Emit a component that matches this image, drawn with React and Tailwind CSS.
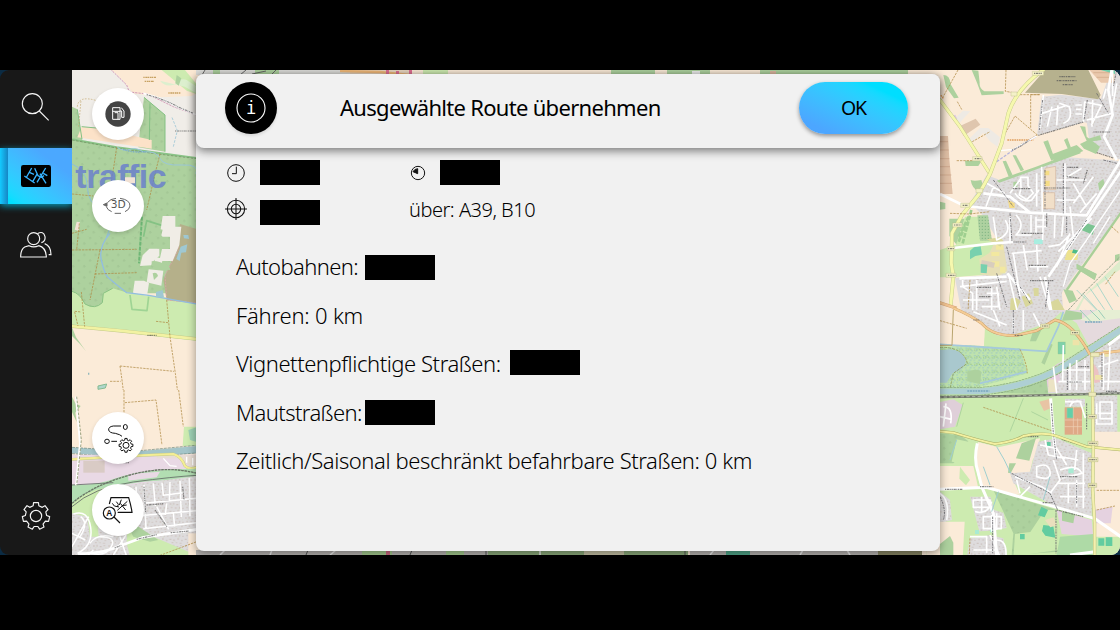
import React from 'react';

const F = { fontFamily: '"Noto Sans", sans-serif' };

function gear(cx, cy, ro, ri, n) {
  const pts = [];
  const step = (Math.PI * 2) / n;
  for (let i = 0; i < n; i++) {
    const a = -Math.PI / 2 + i * step;
    [[-0.3, ri], [-0.2, ro], [0.2, ro], [0.3, ri]].forEach(([o, r]) => {
      pts.push(`${(cx + Math.cos(a + o * step) * r).toFixed(1)} ${(cy + Math.sin(a + o * step) * r).toFixed(1)}`);
    });
  }
  return `M${pts.join('L')}Z`;
}

const Line = ({ d, c, w = 3, dash, o }) => (
  <path d={d} fill="none" stroke={c} strokeWidth={w} strokeDasharray={dash} opacity={o} strokeLinejoin="round" />
);
const Road = ({ d, w = 7, c = '#f6f8ae', e = '#c3c98a' }) => (
  <>
    <Line d={d} c={e} w={w + 2.5} />
    <Line d={d} c={c} w={w} />
  </>
);
const Area = ({ d, c }) => <path d={d} fill={c} />;
const Label = ({ d }) => <Line d={d} c="#555" w={3.5} dash="4 2 7 1.5 3 2" o={0.7} />;
const Track = ({ d }) => <Line d={d} c="#b08a45" w={2.2} dash="7 3" />;

const FIELD = '#fbebd8';
const GRASS = '#cdebb0';
const WOOD = '#add19e';
const TOWN = '#dedcdd';
const WATER = '#aecfd4';

function MapDefs() {
  return (
    <defs>
      <pattern id="houses" width="46" height="42" patternUnits="userSpaceOnUse">
        <rect width="46" height="42" fill={TOWN} />
        <g fill="#d0c7c3">
          <path d="M3 4h5v4H3zM13 2h4v6h-4zM23 6h6v4h-6zM35 3h4v4h-4zM7 14h4v5H7zM19 16h5v4h-5zM31 14h4v6h-4zM41 17h4v4h-4zM2 26h6v4H2zM14 28h4v5h-4zM26 25h5v4h-5zM38 29h4v5h-4zM9 36h5v4H9zM22 37h4v3h-4zM33 38h6v3h-6z" />
        </g>
        <path d="M10 9h3v3h-3zM28 20h4v3h-4zM40 10h3v3h-3zM18 34h3v3h-3z" fill="#d6dacb" />
      </pattern>
      <pattern id="wood" width="34" height="34" patternUnits="userSpaceOnUse">
        <rect width="34" height="34" fill={WOOD} />
        <path d="M5 8l4-4 4 4M9 4v7M23 25l3-4 4 4M26 21v7" fill="none" stroke="#9cc18e" strokeWidth="2" />
      </pattern>
      <pattern id="reed" width="26" height="22" patternUnits="userSpaceOnUse">
        <rect width="26" height="22" fill="#bfe3ad" />
        <path d="M2 5h6M13 3l5 3M20 13h5M7 14l6-3M1 19h4M15 19h6" stroke="#8fbdc9" strokeWidth="2.5" />
        <path d="M9 8h4M17 9h4M3 11h3" stroke="#86b878" strokeWidth="2.5" />
      </pattern>
      <pattern id="orchard" width="9" height="9" patternUnits="userSpaceOnUse">
        <rect width="9" height="9" fill="#aed1a0" />
        <circle cx="4" cy="4" r="2" fill="#80b383" />
      </pattern>
    </defs>
  );
}

function MapWest() {
  return (
    <>
      <g transform="translate(0 60) scale(.33333)">
        <Area d="M216 20H600V300H216Z" c="#f0ede8" />
        <Area d="M322 20H600V95L575 108L480 112L398 100Q375 60 322 20Z" c="#fce9d4" />
        <Area d="M485 30L555 30L600 85V106L560 92Z" c={GRASS} />
        <path d="M480 62q15 20 42 12q20-22 38-14l40 26v20l-46-26z" fill="#dcefce" />
        <path d="M530 45l14 10-8 22-10-8z" fill={WOOD} />
        <path d="M216 140L232 148L246 240L216 236Z" fill="url(#wood)" />
        <path d="M432 112L495 165V275L415 262L420 210Z" fill="url(#wood)" />
        <Area d="M245 200L300 205L455 240V266L232 232Z" c="#fce2c8" />
        <Line d="M245 200L300 205M450 130l-2 110M432 112L495 165V275M232 148l14 90" c="#83c083" w={3} />
        <path d="M216 240L390 268L588 298V640H216Z" fill="url(#wood)" />
        <Line d="M216 238L350 262L450 275L588 294" c="#8ac487" w={6} />
        <Line d="M216 240L350 264L450 279L588 296" c="#6f8a5b" w={2} dash="8 4" />
        <Line d="M330 26L380 75L388 96L442 102L520 140L588 165" c="#d29bb8" w={3} dash="7 3" />
        <Line d="M430 100Q500 118 530 140L588 164" c="#fff" w={5} />
        <Label d="M440 104Q500 120 532 140L580 160" />
        <Label d="M525 213H588" />
        <Line d="M232 140Q235 105 290 122M236 200L243 120" c="#c1a46a" w={2} dash="5 4" />
        <Line d="M520 260L532 212L515 170" c="#9fc6d6" w={2.5} dash="8 4" />
        <Line d="M352 262Q370 275 390 268T430 276Q470 272 480 295T545 315T588 342" c="#9bc7d8" w={3} />
        <Line d="M370 268Q400 280 440 274" c="#78aac6" w={4} dash="3 2" />
        <Line d="M216 312Q260 330 262 380T300 445T328 510Q300 570 300 610" c="#8fbfd7" w={3} />
        <Track d="M216 402L280 408M350 262L343 310L335 358M480 282L468 330L440 450M216 520L260 508M216 572L400 568" />
        <Line d="M430 52h38M434 64h28M505 99h36" c="#b98f45" w={4} dash="4 2 6 1" o={0.8} />
        <text x="226" y="384" fill="#6b80cc" fontFamily="Liberation Sans" fontWeight="700" fontSize="102" textLength="274" opacity=".85">traffic</text>
        <Area d="M375 352h30v18h-30zM230 485l10 2-4 25-12-3z" c="#f3e3d6" />
        <path d="M440 480L588 520V640H418Z" fill="url(#wood)" />
        <Line d="M418 640L425 560L440 482L535 512L588 525" c="#84c284" w={5} />
        <Area d="M535 512L588 528V640H520L518 600Z" c="#b5b08a" />
        <path d="M545 532l18-6-2 22-16 6zM540 562l22-8 2 10-14 24-12-6z" fill="#9fc8d2" />
        <path d="M490 500l42 12-6 40-46 16 4-24 8-8-8-10zM476 568l46-4-10 46-28 20h-60l6-40 16-10 20 10z" fill="#f0ede6" />
      </g>
      <g transform="translate(70 230) scale(.33333)">
        <path d="M6 20H390V190H6Z" fill="url(#wood)" />
        <path d="M6 184Q30 190 45 222Q75 240 97 218L100 190L128 175L165 186L235 196L390 215V335L6 290Z" fill={GRASS} />
        <path d="M6 182Q30 190 45 222Q75 240 97 218L100 190L100 170L6 170Z" fill="url(#wood)" />
        <Area d="M330 -18L390 0V222L290 210L280 150L315 70Z" c="#b5b08a" />
        <Line d="M320 5L325 60L285 135L290 210L390 220" c="#d8a4ab" w={2.5} dash="6 3" />
        <g fill="#f0ede6">
          <path d="M278 -42h38v32h18l-6 55-20 48h-40l8-36h24v-36l-8-18-20-5zM238 56h30v22q-20 12-24 28l-34 2 8-32zM236 118l44 4-6 45-44-10zM194 152h28l15 8-6 38-42-10zM254 80l24 6-4 24-20-4z" />
        </g>
        <path d="M245 94q16-4 52 14l4 12-30-2-26-10zM248 130q12-6 16 8l-12 12z" fill={WOOD} />
        <Line d="M216 -40L207 100" c="#6eb776" w={6} dash="12 3" />
        <Line d="M6 184Q30 190 45 222Q75 240 97 218L100 190L128 175" c="#88c282" w={3} />
        <Line d="M180 195L186 238L231 242L236 200" c="#9fd494" w={5} />
        <Line d="M120 10Q85 50 94 90T112 140T170 188L236 196L390 224" c="#92bde0" w={4} />
        <path d="M340 15l15 0 2 12-15-2zM332 50l20-7-4 24-14 1-5 25-10-6zM258 186l20-6 4 22-24 0z" fill="#9fc8d2" />
        <Area d="M6 292L390 334V580H6Z" c={FIELD} />
        <Road d="M0 288L150 302L390 328" w={8} c="#f2f2a2" />
        <Label d="M232 316h28" />
        <Track d="M6 60L200 58M28 -20L20 60M90 60L60 210M74 132L200 128M34 186L44 290M14 244L34 246M14 246L24 288M290 210L300 320L316 430L334 575M258 274L294 278M150 408L312 424M150 408L156 450L168 550M120 454L152 454M166 518L250 512Q265 530 268 580" />
        <path d="M84 468l26-6-4 12-22 4z" fill="#afd7cc" stroke="#85ba91" strokeWidth="3" />
        <path d="M236 502l8-4 8 4zM54 428h4v6h-4z" fill="#93b9bc" />
        <path d="M6 292l12 30 30 42-18-22L6 318zM6 505l12 20 18 2-16 24-3 24-11-24z" fill={WOOD} />
      </g>
      <g transform="translate(0 390) scale(.33333)">
        <Area d="M216 0H590V178H216Z" c={FIELD} />
        <path d="M216 20l10 20 16 8-16 20 4 28-14-30z" fill={WOOD} />
        <path d="M552 110h38v58h-42z" fill={GRASS} />
        <path d="M565 120l25-8v44l-20-6z" fill="#9ed1b5" />
        <Area d="M216 172L400 185L588 168V190L400 204L216 190Z" c="#a4c5c9" />
        <Line d="M216 172L400 184L588 166M216 191L400 204L588 189" c="#69857c" w={2} dash="9 3" />
        <Area d="M216 194H590V284L216 288Z" c="#e9d9e5" />
        <path d="M470 205h70q20 20 50 35v-44H470z" fill="#e7ddd4" />
        <Area d="M250 212h64v36h-64z" c="#d9cbc5" />
        <Road d="M216 208L430 196L520 192Q545 200 555 228Q568 240 590 232" w={6} c="#f4ee94" />
        <Line d="M490 205l20 22 20 2M560 200v18M578 204v22" c="#fff" w={4} />
        <path d="M216 284Q280 290 350 264T590 236V264L430 275L320 292L216 342Z" fill="#b2deb2" />
        <path d="M385 252L480 245L470 262L385 272Z" fill="#e9d9e5" />
        <path d="M388 285L590 258V500H216V342Q300 300 388 285Z" fill="url(#houses)" />
        <path d="M216 342Q250 305 310 294H400Q300 330 290 370L296 440L270 440L262 380L216 370Z" fill={GRASS} />
        <path d="M382 405L460 440L600 500H390L380 460Z" fill={GRASS} />
        <path d="M382 405L400 400L475 450L450 455L400 440Z" fill={WOOD} />
        <Area d="M565 430h30v70h-30z" c={FIELD} />
        <Line d="M216 340Q280 285 390 255T590 250" c="#697665" w={4} dash="8 2" />
        <Line d="M216 350Q280 292 400 276T590 256M216 285L340 278" c="#646b66" w={2.5} />
        <Line d="M228 20L240 160L228 286" c="#fff" w={6} /><Line d="M230 20L244 150L230 286" c="#89946e" w={2.5} dash="8 4" />
        <Line d="M408 290l4 80M432 284l6 132M460 280l6 68M486 278l4 38 60-8M510 276l-2 60M540 272l4 110M568 264l2 115M430 340L590 325M410 378L588 362M430 416L588 398M470 350l36 68M500 340l-4 35M520 370l4 40M216 470l50-90M220 372q44-15 52 40t-40 78M242 380q25 20-2 60M300 440q50 0 34 30t-60 20M270 460q20-30 70-20M340 495l38-60M360 440l20 60M216 430l40 20M280 480l-20 20" c="#fff" w={4.5} />
        <Line d="M234 490Q300 495 365 466L430 442L590 418" c="#fff" w={8} />
        <Label d="M344 474l20-8M410 448l60-14M512 428l55-5" />
        <Label d="M432 290l5 80M465 360l36 50M440 345l50-4M548 290l4 40M350 218h38" />
        <Track d="M372 0V100M374 38L468 30L486 165M536 0L550 110M470 500L590 455" />
      </g>
    </>
  );
}

function MapEast() {
  return (
    <>
      <g transform="translate(930 60) scale(.33333)">
        <Area d="M-10 20H575V760H-10Z" c={FIELD} />
        <Area d="M336 110L392 104L512 118L545 26H575V305L545 300L410 292L330 320L210 360L170 345L120 430L158 466L215 560L230 640L75 655L95 760H480L400 690L575 455V760H370L400 690L468 610L575 470V300L480 270L470 185L322 225L330 150Z" c={TOWN} />
        <path d="M205 362L320 322L410 292L480 270L470 185L322 225L205 300Z" fill={FIELD} />
        <path d="M336 110L512 118L575 60V295L490 270L485 195L460 185L322 225ZM190 365L335 320L410 295L575 305V450L395 690L400 760H98L88 655L230 640L180 462L115 435L160 400Z" fill="url(#houses)" />
        <path d="M405 690L575 458V750H470L400 712Z" fill={FIELD} />
        <path d="M345 30H475L512 105L505 118L395 102L285 98Z" fill="#b6b18e" />
        <Label d="M388 50h48M380 62h60M398 74h30" />
        <path d="M478 30h75v38h-40z" fill="#e9c8ac" /><Line d="M490 38h58M500 52h50" c="#d0a788" w={2} /><path d="M505 28h50v14z" fill="#71cdaa" />
        <g fill={WOOD}>
          <path d="M40 45q20 0 22 28l24 40-14 2-24-34zM125 30l20 2 4 36q-2 16 14 26l58 0v8l-66 4q-12-35-30-76zM105 302h50l-10 16h-38zM122 360q10 4 32 0l4 14-12 20q-20-8-24-34zM30 425l16 4v18l-16 2z" />
          <path d="M218 304l10-2 20 44-12 4zM248 286l10 0 24 44-10 4zM340 245l14-4 20 55-10 6zM402 240l10-6 10 26-6 12zM360 285l80-30 20 18-84 34zM250 365l12 0v16l-12 0zM504 370l16-14 4 18-16 18z" />
          <path d="M450 198l16 2 4 30 40 30-12 22-36-16-12-14 20-10z" /><path d="M200 362L318 320L450 270L452 280L320 328L208 368ZM470 238l40-12 4 14-35 5z" />
          <path d="M58 476h60l-38 78-22-26zM400 688l28 4 12 28-22 10zM440 612l60 30-6 18-54-34zM555 585l14-4v20l-14 4z" />
        </g>
        <path d="M105 470h60v60l20 10v14H78z" fill={GRASS} />
        <Line d="M86 545L108 490M98 550L124 450M86 530l30-60" c="#9fcf90" w={8} dash="14 4" />
        <path d="M142 466h32l12 76h-36z" fill="url(#orchard)" />
        <path d="M30 570L70 556L192 550L220 575L226 640L70 652H30Z" fill={GRASS} />
        <path d="M190 555l30-2 12 80-30 18-50-8-4-46 30-18z" fill="#e7dfb6" />
        <path d="M198 555h22v14h-22zM184 576h24v12h-24zM186 604h22v16h-22zM210 620h16v18h-16z" fill="#f2e8a0" /><path d="M155 600l40 8-4 16-38-8z" fill="#d8cdbd" />
        <path d="M132 562l20-4 4 26-20 4-16 10v-26zM152 612l20 2-2 26-18-2z" fill="#78d0ae" />
        <path d="M85 200l52-24 14 18-50 34z" fill="#dfc6ae" /><path d="M75 174l24-22 22 2-32 34zM120 234l30-30 25 0 35 28-8 28-22-16-20-26-38 32z" fill="#eeeae4" />
        <path d="M30 228h24l4 70 10 104H30Z" fill="#dfbfa5" />
        <Line d="M30 245h24M30 270h26M30 296h28M30 320h30M30 345h34M30 370h36" c="#c79f84" w={2} />
        <path d="M66 168l10-4 6 14-12 4z" fill="#dcc7df" />
        <path d="M470 490l26 8-8 26-34-14z" fill="#7cc492" /><path d="M312 538h26v14h-26z" fill="#a8eee0" /><path d="M412 570l34 0-4 30-38 0z" fill="#ede28f" /><path d="M430 568l16 4-4 10-16-4z" fill="#4dbb8a" />
        <g fill="#f1dfc8" stroke="#d7b7a0" strokeWidth="2"><path d="M345 325l32-6v70h-32zM338 398h36v48h-36z" /></g>
        <path d="M344 332h14v14h-14zM345 362h14v16h-14zM234 420l20 10v14h-16z" fill="#f5dc86" />
        <path d="M242 716q18-8 30 8l-14 28h-18zM310 684h16v24h-14zM275 710l22-10 12 30-22 12zM358 728l26-12 20 34h-40zM170 538l40-6 10 10-8 18z" fill="#d9d79b" />
        <Line d="M575 455L410 690" c="#a9cf98" w={7} />
        <path d="M440 612l60 30-6 18-54-34z" fill={WOOD} />
        <path d="M430 760l30-50 115-85v-28L470 700l-30 60z" fill="#ddeccb" />
        <Line d="M440 690l60 60M458 700l44 50M480 685l44 64M500 670l48 80M525 650l40 60" c="#9ed2c7" w={2.5} />
        <Line d="M415 750L470 690L570 590" c="#95a38b" w={3} dash="8 3" />
        <Track d="M228 30L226 94L250 98M250 104L330 104L300 104M302 106V205M322 225L255 168L220 230M322 225L270 255M82 125L96 150M118 250L180 215M80 302L130 302M84 30L34 120" />
        <Line d="M232 240H310M40 115l-8-10" c="#e0a060" w={4} dash="5 2" />
        <Line d="M200 305l60-42 60-35" c="#b5b4dc" w={4} dash="9 4" /><Line d="M210 272l40-4L320 228" c="#fff" w={4} />
        <Line d="M330 205l10-100M352 200l14-60M380 196l4-60M400 190q30-10 18-50l-30-10M436 135h20M438 148h16M436 162h20M460 186l4-60 50 10-30 60M488 120l-2 80M336 160l70-22M470 180L545 160L560 70M520 116l8-30M548 108V30M170 370l54 30M190 380l-22 60M240 400l32-44M272 352h22v25l16 22-20 20-22-14 5-20zM255 400q20 30 50 20l22-30M320 340v100M335 320l2 140M405 310v150M380 360h90M380 420h60M455 325l-50 30M490 350l-60 80M500 400l-50 58M430 370l40 70M190 470l10 70q50-20 26-60M240 470v80M258 465q30 30 0 60h45v-60M318 470v50M340 460l-2 80M375 465l-2 70M400 470l-5 60M420 440l10 90M320 480h30M320 500h30M245 580l90-8M280 555l12 76M320 555l4 80M250 580l20 130M300 620h55M235 640l28 120M90 680l140-16M140 660v90M98 720h80M185 685v70M330 650l30 100M420 520l-40 100M385 575l100-100M355 560l35-6 30-30M98 660v20l30 20v50M170 700h35v40h-50M200 680l10 70" c="#fff" w={5} />
        <Line d="M30 402L104 438L300 458L470 466L575 296M160 400L240 410L300 458M70 564L190 550L250 546M88 655L230 650M355 650L575 330M232 640L300 720M545 30L535 90L548 165L522 230L560 300M345 650L365 760" c="#fff" w={8} />
        <Line d="M190 360L250 440M345 330v120M338 120l-10 90M400 310v150M240 460l6 85M230 560l40 160M270 680l30 50M472 120l-10 60M356 665l-10 80M500 100l35 60M560 30l-10 50M410 470v50M200 640l30 100M470 480l-60 90M520 300l40 10" c="#66666b" w={2.5} dash="8 3 3 3" />
        <Label d="M246 270Q270 262 298 240M325 226L460 186M412 322h34M410 350l36 4M248 386h55M275 520h64M250 546h40M296 616h52M300 662h70M140 682h44M148 710h36M342 384h76M500 278l50 16M350 500v-40M472 330l-12 40M490 216h50" />
        <Line d="M575 385L470 540L420 610L400 680M540 470l-50 80" c="#fff" w={4} />
        <Road d="M-4 92L30 120L90 200L180 342" w={8} />
        <Road d="M342 28Q260 85 235 160L215 250L180 342L145 405L96 465L66 520L64 610L70 650L62 735" w={9} />
        <Road d="M20 725L80 745" w={7} c="#f3c592" e="#d2a071" />
        <g fill="#f4f1c8" stroke="#b4b480"><path d="M307 34h34v12h-34zM243 96h18v12h-18zM128 290h28v12h-28zM138 386h20v12h-20zM68 489h28v12H68zM52 560h22v12H52zM48 640h30v12H48zM92 430h26v12H92z" /></g>
        <Label d="M312 40h24M134 296h20M72 495h22M54 566h18M54 646h22M98 436h16" />
        <Track d="M60 460L118 462L180 455M555 635l-30 40M545 500l20 18M120 660l-6 94" />
      </g>
      <g transform="translate(930 310) scale(.33333)">
        <Area d="M-10 0H575V750H-10Z" c={GRASS} />
        <Area d="M-10 0H130L165 50L162 110L-10 102Z" c={FIELD} />
        <path d="M88 0H400L360 36L240 78L200 76L155 40Z" fill="url(#houses)" />
        <path d="M385 0H575V100L540 80L475 105L440 40Z" fill="#e5dadd" />
        <path d="M408 0l48 8v20l-60 4z" fill={WOOD} /><path d="M500 0H575V24L490 35L450 30Z" fill="#e6efd4" /><Line d="M450 0l34 36M480 0l30 30M505 0l20 26" c="#9bcdb8" w={3} />
        <path d="M165 82Q230 90 310 56L375 35L350 90L335 122L162 108Z" fill={GRASS} />
        <path d="M310 60l28-8-20 42-18 0zM360 100l8 4-24 60-10-6z" fill={WOOD} />
        <path d="M384 96h22v36h-22z" fill="#7fd1aa" stroke="#9cc58c" />
        <path d="M385 160L575 60V250H350L340 210Z" fill="url(#houses)" />
        <path d="M325 205L385 160L390 215L352 230Z" fill="#e4cbdd" />
        <path d="M355 208h24v38h-24z" fill="#ebe3c4" /><path d="M490 160l14 20 6 36-16 4-8-30z" fill="#ecc2c2" /><path d="M428 90h20v16h-20zM495 195l26 0v14h-26zM520 120l20 0v20h-16z" fill="#eee3a9" />
        <path d="M-10 118L110 105L270 115L292 190L150 230L60 235H-10Z" fill="url(#reed)" />
        <path d="M112 186q30-14 42 0l-4 36-38-8z" fill={WOOD} />
        <Area d="M-10 120H40Q90 110 108 150Q105 180 68 190L50 218H-10Z" c="#a9c8ce" />
        <Line d="M30 112Q100 110 112 160L70 190L60 235H30" c="#94a66c" w={3} dash="9 3" />
        <Line d="M30 103L350 124L385 50L400 5M150 220L290 185" c="#a5c9dc" w={5} />
        <path d="M200 250L320 200L385 176L350 210L355 252Z" fill="url(#wood)" />
        <Line d="M-10 244H150Q300 230 400 170L575 58" c="#7c9a76" w={25} dash="8 2" />
        <Line d="M-10 244H150Q300 230 400 170L575 58" c="#b7dba6" w={22} />
        <Line d="M-10 244H150Q300 230 400 170L575 58" c={WATER} w={17} />
        <Line d="M112 243h66M465 36h50" c="#79a7bd" w={5} dash="6 2" />
        <Road d="M70 -6Q120 15 155 40Q190 80 260 76L320 62L375 30Q430 40 480 134" w={6} c="#f4cb94" e="#c99c63" />
        <Road d="M480 134L575 122" w={6} c="#f4cb94" e="#c99c63" />
        <Line d="M70 0L66 106M66 106H30" c="#b9a56e" w={3} />
        <Line d="M-10 262L250 258L575 250" c="#70756b" w={7} /><Line d="M-10 262L250 258L575 250" c="#c9cdc0" w={2} dash="10 7" />
        <path d="M30 276L70 268L98 285L75 350L30 358Z" fill="#dfcfd9" /><Line d="M40 290q30 0 22 50M30 320l34 8M48 280l-8 70" c="#fff" w={5} />
        <Line d="M280 265L240 365M100 278L80 350M304 305l50 25" c="#aed59e" w={3} />
        <Track d="M160 292L365 362M30 32L110 55M270 118q20 40 22 72" />
        <path d="M328 275l30-8 4 28-20 8z" fill="#e8c4a4" /><path d="M405 266h60v24h-60zM492 256h70v110H492Z" fill="url(#houses)" />
        <path d="M404 292h52v82h-52z" fill="#dfa986" /><Line d="M404 330h52M404 350h52M430 290v82M443 325v48" c="#eed1b8" w={2} /><path d="M411 294h18v30h-18z" fill="#62cfa9" stroke="#a5c9a0" strokeWidth="2" />
        <path d="M30 370L90 375L115 394L90 440L70 460H30Z" fill="url(#wood)" /><path d="M80 388L136 400L132 465L65 455Z" fill={GRASS} />
        <path d="M144 396L205 412L330 385L320 430L308 450L300 485L245 500L270 555L155 535Q130 480 144 396Z" fill={FIELD} />
        <path d="M275 400L318 384L298 452L258 445ZM238 460l20 0-16 30-8-2z" fill={WOOD} />
        <Area d="M30 468H130L145 535L30 538ZM492 365H575V680H495Z" c={FIELD} />
        <path d="M90 470l30 40-12 16-20-20z" fill={GRASS} />
        <path d="M325 395L380 385L485 430V618L375 590L250 520L240 490L300 485Z" fill="url(#houses)" />
        <path d="M30 545L60 570L66 630L30 640Z" fill="url(#houses)" />
        <path d="M190 540L380 600L385 725L245 735L250 670Z" fill="url(#wood)" />
        <path d="M345 600l35 0 5 120-100 14-34 0 4-62 46-6z" fill={GRASS} />
        <path d="M-10 635H104L98 745H-10Z" fill={FIELD} /><path d="M30 702l30-24 10 20v50H30Z" fill={WOOD} />
        <path d="M120 560h62l10 40 28 8 10 46-48 8-34 2zM120 685l60-10 40 10 10 60H110Z" fill="url(#houses)" />
        <path d="M380 600L485 630L490 680L395 672Z" fill="#e5d2e0" /><path d="M396 606h40l-6 34-34-8z" fill={WOOD} /><path d="M494 600l54-10-6 50-44 0z" fill="#e5d2e0" />
        <path d="M390 680L490 672L488 735H380Z" fill="#aedaa6" /><path d="M505 685h18v22h-18zM527 682h20v26h-20zM334 590l20 10-10 22-20-6zM340 645l30 4 6 34-30-6-10-14zM270 672h14v16h-14zM350 396h12v12h-12z" fill="#62cca0" />
        <path d="M415 474h16v16h-16zM135 660h12v12h-12zM180 655h10v12h-10z" fill="#a9ebd3" /><path d="M345 630l26-8 10 24-20 6z" fill="#eadfbd" />
        <Line d="M400 105L398 215M385 215h100M420 160v80M440 150v90M465 150v90M400 180h80M370 170l10 80M520 130v110M540 110l-6 130M505 170l60-20M510 215h60M420 290q5-20 30-16l16 50M405 275h50M500 280v62h46v-66h-36v50h36M505 310h40M330 405l50 10 30 50M345 390l10 45 50 10M390 440l55 10M320 470q35-15 40 15t-40 15zM370 450l20 60-30 40M390 480q50-20 66 10l-60 14M440 420l-6 60M385 520h80M390 560h75M415 520v60M440 510v80M460 430v165M260 510l10 40M300 530l-30 30M365 550l-30-20-80-30M30 550q30 20 20 80M130 570h50v22h-50zM135 605q40 10 50-30M155 560v50M160 620h54v36h-54zM185 615v50M200 610v50M120 680h50v50M180 675l30 65M130 720h70M200 690q30 0 28 45M250 20v45M280 0v60M310 10l20 40M130 5l100 40M190 0l20 50" c="#fff" w={5} />
        <Line d="M362 265L370 370L378 440M142 400Q130 450 145 490L156 532M30 538L170 532L372 590L495 626L575 682M156 532L190 610L200 735M575 75L535 105M420 735L490 726" c="#fff" w={9} />
        <Line d="M364 280L370 370L380 450M245 490L360 550L382 598M188 620v110M378 600v130M470 280v80M412 170v70M30 560q20 40 10 70M250 0v70M440 580v-60M484 180v60M516 130v100" c="#65656a" w={2.5} dash="7 3 4 2" />
        <Label d="M45 538h52M338 578h30M412 216h44M445 170h34M528 244h34M150 530h40M380 600l80 20M390 500h52M275 380h50M395 388l46 14" />
        <Line d="M200 410Q225 450 242 490M160 470l20 55M205 545l-20 60M360 500l-20 70M60 450l20-60" c="#9fcfd0" w={3} />
        <Road d="M-10 360L70 368Q140 390 195 402Q250 395 280 378Q340 365 380 378L470 410L575 420" w={6} c="#f3f0a0" e="#a8ad68" />
        <Road d="M485 134L488 260L490 420L488 540L494 640V750" w={7} c="#f3f0ae" e="#b9ba78" />
        <g fill="#eeeabb" stroke="#9fa069"><path d="M474 394h30v12h-30zM474 443h30v12h-30zM474 520h26v12h-26zM476 247h22v12h-22zM474 314h26v12h-26zM422 62h26v12h-26zM332 42h26v12h-26zM482 128h26v12h-26z" /></g>
        <Label d="M478 400h22M478 449h22M478 526h18M478 320h18M254 76h24M426 68h18M336 48h20M130 30h20" />
        <Track d="M500 541H570M500 600L555 588M120 685l-2 50" />
      </g>
    </>
  );
}

function MapMiddle() {
  return (
    <>
      <path d="M196 70h154v5H196z" fill="#dcdcd9" /><path d="M350 70h60v5h-60z" fill="#e8d5bf" />
      <path d="M213 70h7v5h-7zM255 70h24v5h-24zM611 70h44v5h-44zM667 70h43v5h-43zM760 70h148v5H760z" fill={WOOD} />
      <path d="M423 70h25v5h-25z" fill={GRASS} />
      <path d="M202 75l3-5M240 75l6-5M252 74l14-3M271 75l5-5" stroke="#666" fill="none" />
      <path d="M340 71l40 1 30 3" stroke="#f0b878" strokeWidth="2.5" fill="none" />
      <path d="M386 70h3v4h-3zM396 71h3v4h-3zM409 70h3v5h-3z" fill="#df6f93" />
      <path d="M692 71h8v3h-8z" fill="#eee" /><path d="M770 71h6v4h-6z" fill="#dcb7a0" />
      <path d="M196 550h292v5H196zM690 550h190v5H690z" fill="#bab7b4" />
      <path d="M488 550h200v5H488z" fill="#8fae7e" /><path d="M362 550h30v5h-30zM446 550h18v5h-18z" fill="#a8cf92" />
      <path d="M584 550h40v5h-40z" fill="#c9c5a8" /><path d="M386 550h4v5h-4z" fill="#cf6a84" /><path d="M726 550h24v5h-24z" fill="#52a98c" />
      <path d="M878 550h44v5h-44z" fill="#8a8865" />
      <path d="M220 555l5-5M270 555l2-5M330 555l6-5M540 555v-5M710 555l4-5M800 555l3-5M850 555l-3-5" stroke="#eee" strokeWidth="1.5" />
      <path d="M486 555v-5M685 555v-5M306 555l2-5M410 555l2-5" stroke="#555" />
    </>
  );
}

function CityMap() {
  return (
    <svg className="absolute inset-0 h-full w-full" viewBox="0 70 1120 485" preserveAspectRatio="none">
      <MapDefs />
      <rect x="60" y="70" width="1060" height="485" fill={FIELD} />
      <MapWest />
      <MapMiddle />
      <MapEast />
    </svg>
  );
}

const Round = ({ children, className = '' }) => (
  <button className={`flex h-[52px] w-[52px] shrink-0 items-center justify-center rounded-full bg-white shadow-[0_2px_4px_rgba(0,0,0,0.14)] ${className}`}>{children}</button>
);

function Sidebar() {
  return (
    <nav className="relative flex h-full w-[72px] shrink-0 flex-col overflow-hidden rounded-l-[9px] bg-[#181818]">
      <div className="flex h-[78px] items-center pl-5">
        <svg className="-mt-[6px] h-8 w-[30px]" viewBox="60 90 90 96" fill="none" stroke="#f4f4f4" strokeWidth="3.5">
          <circle cx="97" cy="131" r="30" /><path d="M118 153L146 181" />
        </svg>
      </div>
      <div className="flex h-14 bg-linear-to-tr from-[#00e0ff] from-10% to-[#4ba8ff] to-75% shadow-[0_2px_7px_rgba(0,200,240,0.75)]">
        <div className="h-full w-2 bg-linear-to-r from-[#13caff] to-[#1686c4]" />
        <div className="flex items-center pl-[13px]">
          <svg className="h-[22px] w-[30px]" viewBox="63 315 90 66">
            <rect x="63" y="315" width="90" height="66" rx="7" />
            <g fill="none" stroke="#37b3ff" strokeWidth="4">
              <path d="M95 324L78 354M73 348L104 369M88 337L102 343M98 365L112 341M104 325L114 347L124 352L132 347M137 324L111 367M120 341L138 370M130 340L142 347" />
            </g>
          </svg>
        </div>
      </div>
      <div className="flex h-[83px] items-center justify-center">
        <svg className="h-8 w-8" viewBox="59 508 96 96" fill="none" stroke="#f4f4f4" strokeWidth="3.5">
          <circle cx="100" cy="534" r="18" />
          <path d="M61 589Q61 566 73 559L86 555Q100 562 115 555Q137 560 138 589ZM111 519Q130 509 134 528Q136 542 123 546M133 549Q152 556 152 582H145" />
        </svg>
      </div>
      <div className="mt-auto flex h-[78px] items-center justify-center">
        <svg className="h-8 w-8" viewBox="59 330 96 96" fill="none" stroke="#f4f4f4" strokeWidth="3.5" strokeLinejoin="round">
          <path d={gear(107, 378, 41, 32, 7)} /><circle cx="107" cy="378" r="17" />
        </svg>
      </div>
    </nav>
  );
}

function MapButtons() {
  return (
    <div className="relative flex w-[124px] shrink-0 flex-col pt-[18px] pl-5">
      <Round>
        <svg className="h-9 w-9" viewBox="299 107 108 108" fill="none" stroke="#fff" strokeWidth="3">
          <circle cx="353" cy="161" r="38" fill="#444" stroke="none" />
          <path d="M337 142H359V177H337ZM343 157H353V177M359 152H364V171H371V152L363 142M337 153h22" />
        </svg>
      </Round>
      <Round className="mt-10">
        <svg className="h-9 w-9" viewBox="299 384 108 108" fill="none" stroke="#666" strokeWidth="3">
          <path d="M321 428Q330 416 347 415M359 415Q389 419 389 438Q387 450 374 455M362 460H343M334 455Q321 450 318 440" />
          <path d="M309 434L320 429V439Z" fill="#666" />
          <text x="331" y="445" fontSize="31" textLength="45" lengthAdjust="spacingAndGlyphs" fontFamily="DejaVu Sans" fill="#555" stroke="none">3D</text>
        </svg>
      </Round>
      <Round className="mt-[180px]">
        <svg className="h-9 w-9" viewBox="300 90 108 108" fill="none" stroke="#111" strokeWidth="3">
          <ellipse cx="376" cy="111" rx="6" ry="7.5" /><ellipse cx="321" cy="154" rx="7" ry="6.5" />
          <path d="M363 108H340Q325 110 326 120Q328 129 346 130Q362 134 366 139M334 154H351" />
          <path d={gear(378, 166, 21, 16, 8)} /><circle cx="378" cy="166" r="9" />
        </svg>
      </Round>
      <Round className="mt-5">
        <svg className="h-9 w-9" viewBox="300 306 108 108" fill="none" stroke="#111" strokeWidth="3.5">
          <path d="M328 342L333 323H386Q394 350 396 367H353M342 381L360 399" /><circle cx="328" cy="369" r="18" />
          <path d="M337 340L343 348L357 351M349 335L355 343L352 351M364 329L358 345M361 340L377 360M382 334L352 361M366 347L380 345" strokeWidth="3" />
          <text x="319" y="378" fontSize="25" fontWeight="700" fontFamily="Liberation Sans" fill="#111" stroke="none">A</text>
        </svg>
      </Round>
    </div>
  );
}

const Bar = ({ className = '' }) => <span className={`block shrink-0 bg-black ${className}`} />;

function RouteDialog() {
  return (
    <section className="relative mt-1 flex h-[477px] w-[744px] flex-col rounded-lg bg-[#f1f1f1] text-black shadow-[0_3px_10px_rgba(0,0,0,0.4)]">
      <header className="flex h-[74px] shrink-0 items-center rounded-lg bg-[#f1f1f1] pr-8 pb-[6px] pl-[29px] shadow-[0_3px_10px_rgba(0,0,0,0.5)]">
        <span className="flex h-[52px] w-[52px] items-center justify-center rounded-full bg-black shadow-[0_2px_3px_rgba(0,0,0,0.1)]">
          <svg className="h-[30px] w-[30px]" viewBox="0 0 30 30">
            <circle cx="15" cy="15" r="14" fill="none" stroke="#fff" strokeWidth="1.1" />
            <text x="15" y="20.8" fontSize="17" textAnchor="middle" fontFamily="DejaVu Sans Mono" fill="#fff">i</text>
          </svg>
        </span>
        <h1 className="mb-0.5 ml-[63px] text-[22px] leading-8 tracking-[-0.7px] whitespace-nowrap">Ausgewählte Route übernehmen</h1>
        <button className="ml-auto h-[52px] w-[109px] rounded-full bg-linear-to-tr from-[#4ca6ff] from-15% to-[#00deff] to-80% text-[19.5px] tracking-[-1.2px] shadow-[0_2px_4px_rgba(0,0,0,0.4)]">OK</button>
      </header>
      <div className="flex h-[101px] shrink-0 pt-3 pl-[29px]">
        <div className="flex w-[180px] flex-col">
          <div className="flex h-[25px] items-center">
            <svg className="ml-0.5 h-[18px] w-[18px]" viewBox="93 312 54 54" fill="none" stroke="#111" strokeWidth="3">
              <circle cx="120" cy="339" r="25" /><path d="M121 320V341H108" />
            </svg>
            <Bar className="ml-[15px] h-[25px] w-[60px]" />
          </div>
          <div className="mt-[15px] flex h-[25px]">
            <svg className="-mt-[2px] h-[22px] w-[22px]" viewBox="87 414 66 66" fill="none" stroke="#111" strokeWidth="3.2">
              <circle cx="120" cy="447" r="26" /><circle cx="120" cy="447" r="14" /><path d="M120 414V480M87 447H153" />
            </svg>
            <Bar className="ml-[13px] h-[25px] w-[60px]" />
          </div>
        </div>
        <div className="flex flex-col">
          <div className="flex h-[25px] items-center">
            <svg className="ml-[5px] h-4 w-4" viewBox="642 315 48 48" fill="none" stroke="#111" strokeWidth="3">
              <circle cx="666" cy="339" r="20" /><path d="M665 341V326Q655 327 651 335Z" fill="#111" />
            </svg>
            <Bar className="ml-[14px] h-[25px] w-[60px]" />
          </div>
          <p className="mt-[11px] ml-1 text-[20px] leading-[27px] font-light tracking-[-0.5px]">über: A39, B10</p>
        </div>
      </div>
      <div className="flex flex-col gap-[16.5px] pt-px pl-10 text-[22px] leading-8 font-light whitespace-nowrap">
        <div className="flex h-8 items-center"><span className="w-[129px] tracking-[-0.62px]">Autobahnen:</span><Bar className="mt-0.5 h-[25px] w-[70px]" /></div>
        <p className="tracking-[-0.2px]">Fähren: 0 km</p>
        <div className="flex h-8 items-center"><span className="w-[274px] tracking-[-0.45px]">Vignettenpflichtige Straßen:</span><Bar className="-mt-0.5 h-[25px] w-[70px]" /></div>
        <div className="flex h-8 items-center"><span className="w-[129px] tracking-[-0.6px]">Mautstraßen:</span><Bar className="mt-0.5 h-[25px] w-[70px]" /></div>
        <p className="tracking-[-0.41px]">Zeitlich/Saisonal beschränkt befahrbare Straßen: 0 km</p>
      </div>
    </section>
  );
}

export default function App() {
  return (
    <main className="h-[630px] w-[1120px] overflow-hidden bg-black py-[70px]" style={F}>
      <div className="relative flex h-[485px] overflow-hidden bg-[#0b2b43]">
        <div className="absolute inset-0 left-[60px] overflow-hidden rounded-r-[9px]">
          <div className="relative -ml-[60px] h-full w-[1120px]"><CityMap /></div>
        </div>
        <Sidebar />
        <MapButtons />
        <RouteDialog />
      </div>
    </main>
  );
}
